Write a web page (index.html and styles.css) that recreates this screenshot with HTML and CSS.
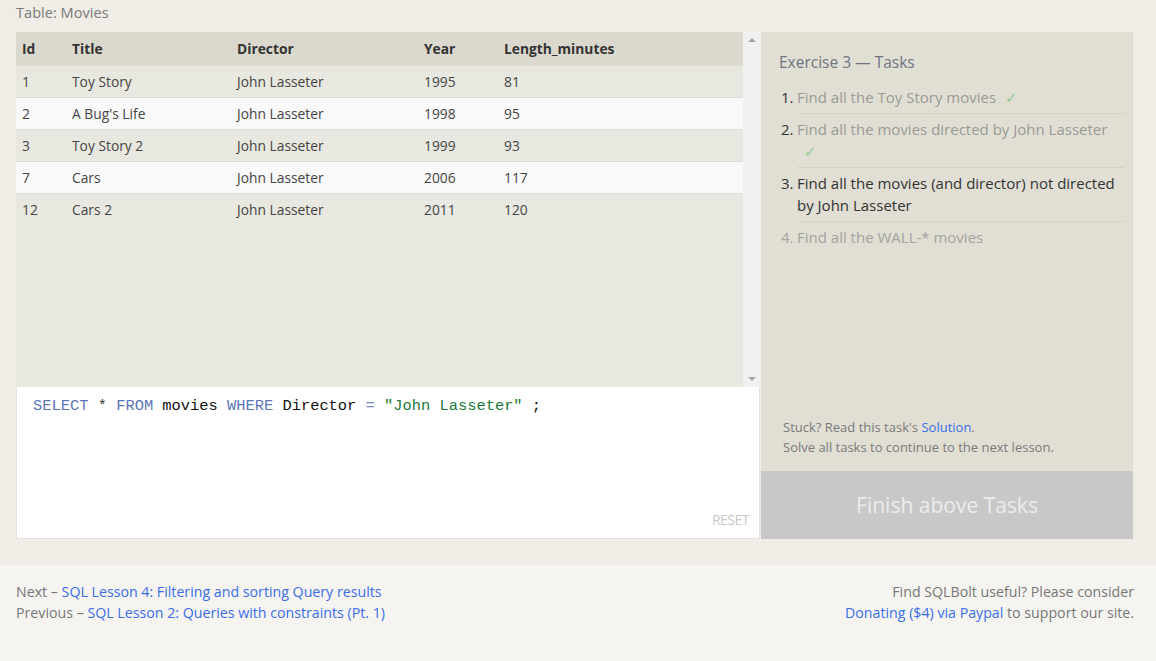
FILE: index.html
```html
<!DOCTYPE html>
<html>
<head>
<meta charset="utf-8">
<link rel="stylesheet" href="styles.css">
</head>
<body>
<div class="top">
  <div class="table-label">Table: Movies</div>
  <div class="workspace">
    <div class="left">
      <div class="table-wrap">
        <div class="table-scroll">
          <table class="results">
            <thead>
              <tr><th class="c-id">Id</th><th class="c-title">Title</th><th class="c-dir">Director</th><th class="c-year">Year</th><th>Length_minutes</th></tr>
            </thead>
            <tbody>
              <tr><td>1</td><td>Toy Story</td><td>John Lasseter</td><td>1995</td><td>81</td></tr>
              <tr><td>2</td><td>A Bug's Life</td><td>John Lasseter</td><td>1998</td><td>95</td></tr>
              <tr><td>3</td><td>Toy Story 2</td><td>John Lasseter</td><td>1999</td><td>93</td></tr>
              <tr><td>7</td><td>Cars</td><td>John Lasseter</td><td>2006</td><td>117</td></tr>
              <tr><td>12</td><td>Cars 2</td><td>John Lasseter</td><td>2011</td><td>120</td></tr>
            </tbody>
          </table>
        </div>
        <div class="scrollbar">
          <span class="arrow up"></span>
          <span class="arrow down"></span>
        </div>
      </div>
      <div class="editor">
        <div class="code"><span class="kw">SELECT</span> <span class="op">*</span> <span class="kw">FROM</span> movies <span class="kw">WHERE</span> Director <span class="eq">=</span> <span class="str">"John Lasseter"</span> ;</div>
        <div class="reset">RESET</div>
      </div>
    </div>
    <div class="right">
      <div class="tasks">
        <div class="tasks-title">Exercise 3 — Tasks</div>
        <ol class="task-list">
          <li class="done"><span class="num">1.</span><span class="txt">Find all the Toy Story movies <span class="check">✓</span></span></li>
          <li class="done"><span class="num">2.</span><span class="txt">Find all the movies directed by John Lasseter <span class="check">✓</span></span></li>
          <li class="current"><span class="num">3.</span><span class="txt">Find all the movies (and director) not directed by John Lasseter</span></li>
          <li class="todo"><span class="num">4.</span><span class="txt">Find all the WALL-* movies</span></li>
        </ol>
        <div class="hint">
          <div>Stuck? Read this task's <a href="#">Solution</a>.</div>
          <div>Solve all tasks to continue to the next lesson.</div>
        </div>
      </div>
      <div class="finish">Finish above Tasks</div>
    </div>
  </div>
</div>
<div class="footer">
  <div class="nav">
    <div>Next – <a href="#">SQL Lesson 4: Filtering and sorting Query results</a></div>
    <div>Previous – <a href="#">SQL Lesson 2: Queries with constraints (Pt. 1)</a></div>
  </div>
  <div class="donate">
    <div>Find SQLBolt useful? Please consider</div>
    <div><a href="#">Donating ($4) via Paypal</a> to support our site.</div>
  </div>
</div>
</body>
</html>
```

FILE: styles.css
```css
* { box-sizing: border-box; }
html, body { margin: 0; padding: 0; }
body {
  font-family: "Open Sans", "Noto Sans", sans-serif;
  background: #f5f4f1;
  color: #333;
}
a { color: #3a6ee8; text-decoration: none; }

.top {
  background: #efede6;
  padding: 0 22px 26px 16px;
}
.table-label {
  font-size: 14.6px;
  color: #7a7a7a;
  height: 32px;
  line-height: 24px;
}
.workspace {
  display: flex;
  height: 507px;
}
.left {
  width: 744px;
  display: flex;
  flex-direction: column;
}
.table-wrap {
  height: 355px;
  display: flex;
  background: #e9e8e0;
}
.table-scroll { flex: 1; }
.results {
  width: 100%;
  border-collapse: collapse;
  font-size: 13.8px;
}
.results th {
  text-align: left;
  font-weight: 700;
  color: #333;
  background: #dbd9cd;
  height: 33px;
  padding: 0 6px;
}
.results td {
  height: 32px;
  padding: 0 6px;
  color: #444;
  border-top: 1px solid #dedcd4;
}
.results .c-id { width: 50px; }
.results .c-title { width: 165px; }
.results .c-dir { width: 187px; }
.results .c-year { width: 80px; }
.results tbody tr:nth-child(even) td { background: #f9f9f9; }
.scrollbar {
  width: 17px;
  background: #f1f1f1;
  display: flex;
  flex-direction: column;
  justify-content: space-between;
  align-items: center;
  padding: 6px 0 6px;
}
.arrow {
  width: 0; height: 0;
  border-left: 4px solid transparent;
  border-right: 4px solid transparent;
}
.arrow.up { border-bottom: 4px solid #a3a3a3; }
.arrow.down { border-top: 4px solid #a3a3a3; }

.editor {
  flex: 1;
  background: #fff;
  border: 1px solid #e4e2da;
  border-top: none;
  position: relative;
  padding: 9px 16px;
}
.code {
  font-family: "Liberation Mono", "DejaVu Sans Mono", monospace;
  font-size: 15.4px;
  color: #111;
  line-height: 20px;
}
.kw { color: #5b76b8; }
.op { color: #333; }
.eq { color: #7a8cc4; }
.str { color: #1a7a3a; }
.reset {
  position: absolute;
  right: 10px;
  bottom: 9px;
  font-size: 14px;
  color: #c8c8c8;
  letter-spacing: -0.5px;
}

.right {
  width: 372px;
  margin-left: 1px;
  display: flex;
  flex-direction: column;
  background: #e1dfd4;
}
.tasks {
  flex: 1;
  display: flex;
  flex-direction: column;
  padding: 19px 9px 14px 18px;
}
.tasks-title {
  font-size: 15.5px;
  color: #6e7580;
  line-height: 22px;
}
.task-list {
  list-style: none;
  margin: 9px 0 0;
  padding: 0;
  font-size: 15px;
  line-height: 22px;
}
.task-list li {
  display: flex;
  padding: 4px 0 6px;
  position: relative;
}
.task-list .num { width: 16px; flex: none; color: #333; margin-left: 2px; }
.task-list .txt { flex: 1; }
.task-list li::after {
  content: "";
  position: absolute;
  left: 18px;
  right: 0;
  bottom: 0;
  border-bottom: 1px solid #d4d2c6;
}
.task-list li:last-child::after { display: none; }
.done .txt { color: #9a9a96; }
.current .txt { color: #333; }
.todo .num, .todo .txt { color: #a3a39f; }
.check { color: #8fcc8f; margin-left: 5px; }
.task-list li:nth-child(2) .check { margin-left: 7px; }

.hint {
  margin-top: auto;
  font-size: 13px;
  color: #7a7a7a;
  line-height: 20px;
  padding-left: 4px;
}
.finish {
  height: 68px;
  background: #c8c8c8;
  color: #ececec;
  font-size: 21px;
  display: flex;
  align-items: center;
  justify-content: center;
}

.footer {
  display: flex;
  justify-content: space-between;
  padding: 16px 22px 0 16px;
  font-size: 14.2px;
  line-height: 21px;
  color: #777;
}
.donate { text-align: right; }
```
